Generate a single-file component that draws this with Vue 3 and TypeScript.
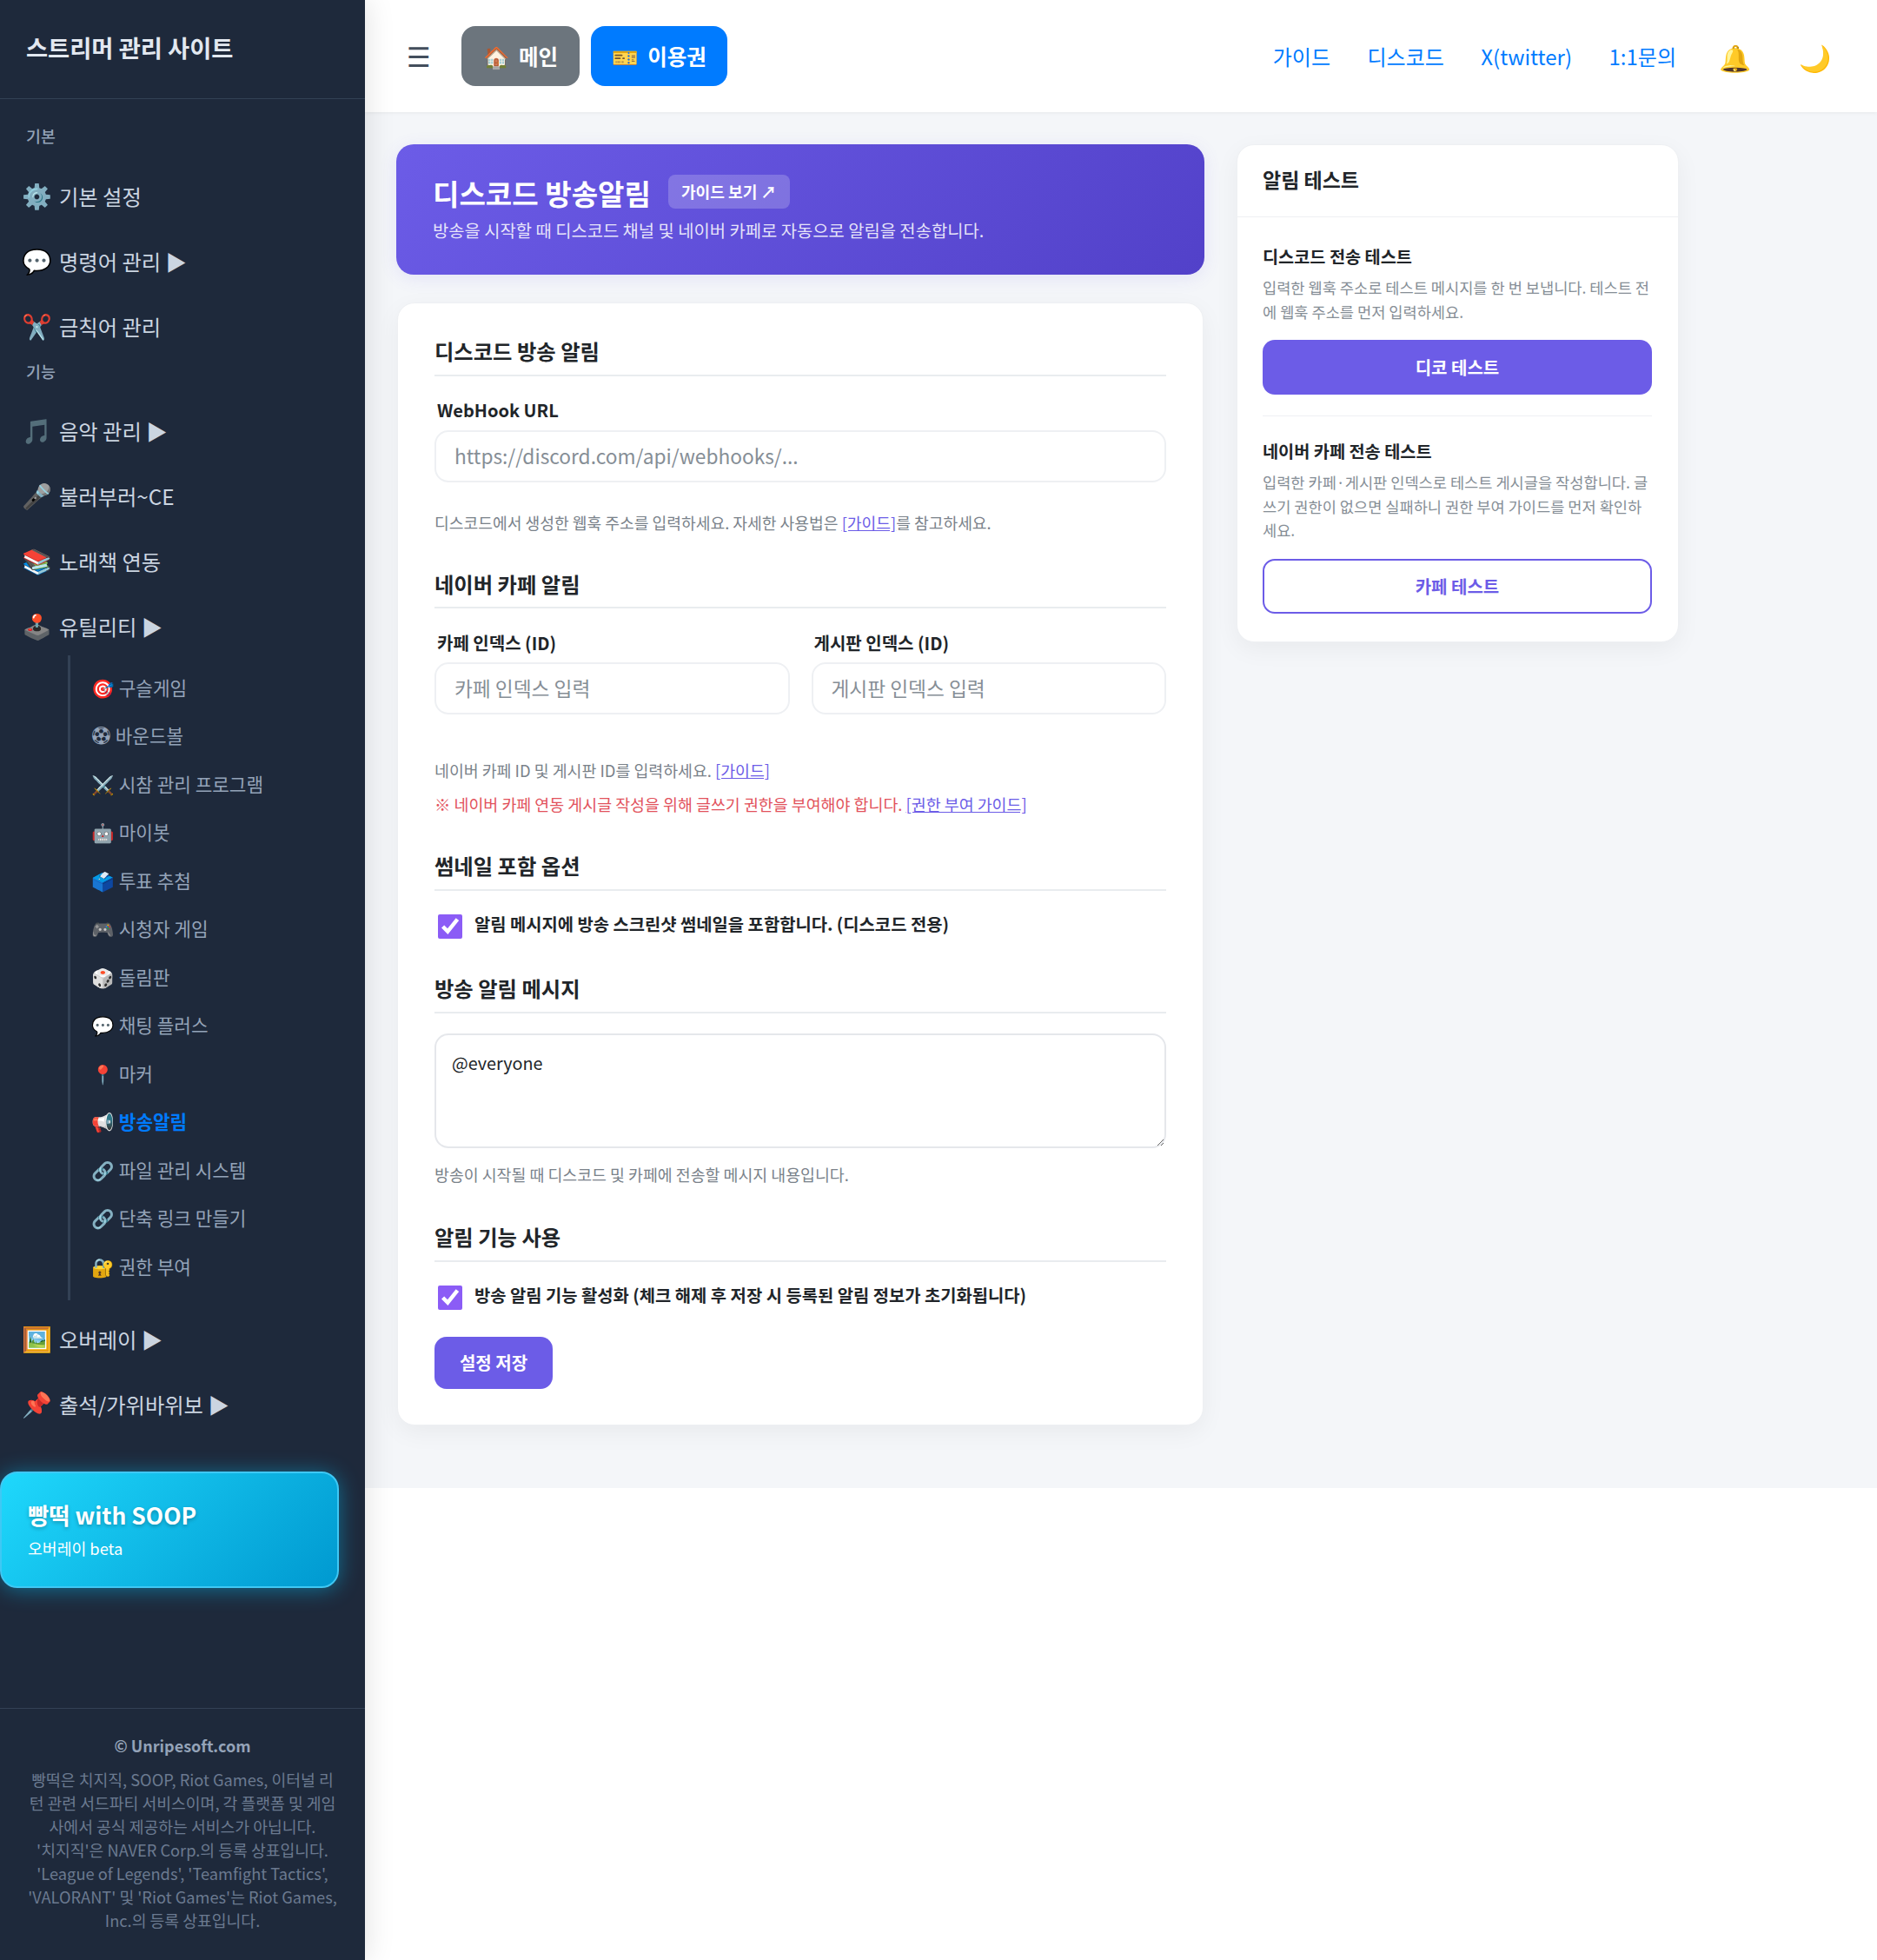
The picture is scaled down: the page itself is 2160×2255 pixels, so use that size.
<script setup lang="ts">
interface NavItem { icon: string; label: string; arrow?: boolean }
const basic: NavItem[] = [
  { icon: '⚙️', label: '기본 설정' },
  { icon: '💬', label: '명령어 관리', arrow: true },
  { icon: '✂️', label: '금칙어 관리' },
]
const feature: NavItem[] = [
  { icon: '🎵', label: '음악 관리', arrow: true },
  { icon: '🎤', label: '불러부러~CE' },
  { icon: '📚', label: '노래책 연동' },
  { icon: '🕹️', label: '유틸리티', arrow: true },
]
const subs = [
  { icon: '🎯', label: '구슬게임' },
  { icon: '⚽\uFE0E', label: '바운드볼', text: true },
  { icon: '⚔️', label: '시참 관리 프로그램' },
  { icon: '🤖', label: '마이봇' },
  { icon: '🗳️', label: '투표 추첨' },
  { icon: '🎮', label: '시청자 게임' },
  { icon: '🎲', label: '돌림판' },
  { icon: '💬', label: '채팅 플러스' },
  { icon: '📍', label: '마커' },
  { icon: '📢', label: '방송알림', active: true },
  { icon: '🔗', label: '파일 관리 시스템' },
  { icon: '🔗', label: '단축 링크 만들기' },
  { icon: '🔐', label: '권한 부여' },
]
const after: NavItem[] = [
  { icon: '🖼️', label: '오버레이', arrow: true },
  { icon: '📌', label: '출석/가위바위보', arrow: true },
]
const footerLines = [
  '빵떡은 치지직, SOOP, Riot Games, 이터널 리',
  '턴 관련 서드파티 서비스이며, 각 플랫폼 및 게임',
  '사에서 공식 제공하는 서비스가 아닙니다.',
  "'치지직'은 NAVER Corp.의 등록 상표입니다.",
  "'League of Legends', 'Teamfight Tactics',",
  "'VALORANT' 및 'Riot Games'는 Riot Games,",
  'Inc.의 등록 상표입니다.',
]
</script>

<template>
  <div class="page">
    <aside class="sidebar">
      <div class="brand">스트리머 관리 사이트</div>
      <nav class="nav">
        <div class="group-label">기본</div>
        <a v-for="i in basic" :key="i.label" class="nav-item"><span class="emo">{{ i.icon }}</span> {{ i.label }}<span v-if="i.arrow"> ▶</span></a>
        <div class="group-label second">기능</div>
        <a v-for="i in feature" :key="i.label" class="nav-item"><span class="emo">{{ i.icon }}</span> {{ i.label }}<span v-if="i.arrow"> ▶</span></a>
        <ul class="sub">
          <li v-for="s in subs" :key="s.label" class="sub-item" :class="{ active: s.active }"><span :class="s.text ? 'ball' : 'sub-emo'">{{ s.icon }}</span> {{ s.label }}</li>
        </ul>
        <a v-for="i in after" :key="i.label" class="nav-item"><span class="emo">{{ i.icon }}</span> {{ i.label }}<span v-if="i.arrow"> ▶</span></a>
      </nav>
      <div class="promo">
        <div class="promo-title">빵떡 with SOOP</div>
        <div class="promo-sub">오버레이 beta</div>
      </div>
      <footer class="foot">
        <div class="foot-title">© Unripesoft.com</div>
        <div class="foot-text"><div v-for="l in footerLines" :key="l">{{ l }}</div></div>
      </footer>
    </aside>

    <div class="main">
      <header class="topbar">
        <div class="top-left">
          <span class="burger">☰</span>
          <a class="pill grey"><span class="pill-emo">🏠</span> 메인</a>
          <a class="pill blue"><span class="pill-emo">🎫</span> 이용권</a>
        </div>
        <div class="top-right">
          <a>가이드</a>
          <a>디스코드</a>
          <a>X(twitter)</a>
          <a>1:1문의</a>
          <span class="top-emo bell">🔔</span>
          <span class="top-emo moon">🌙</span>
        </div>
      </header>

      <div class="content">
        <div class="col-left">
          <section class="banner">
            <div class="banner-head">
              <h1>디스코드 방송알림</h1>
              <a class="chip">가이드 보기 ↗</a>
            </div>
            <p>방송을 시작할 때 디스코드 채널 및 네이버 카페로 자동으로 알림을 전송합니다.</p>
          </section>

          <section class="card form">
            <h2 class="first">디스코드 방송 알림</h2>
            <label class="lab lab-first">WebHook URL</label>
            <input class="field" placeholder="https://discord.com/api/webhooks/..." />
            <p class="hint h1">디스코드에서 생성한 웹훅 주소를 입력하세요. 자세한 사용법은 <a class="lnk">[가이드]</a>를 참고하세요.</p>

            <h2 class="naver">네이버 카페 알림</h2>
            <div class="two">
              <div>
                <label class="lab">카페 인덱스 (ID)</label>
                <input class="field" placeholder="카페 인덱스 입력" />
              </div>
              <div>
                <label class="lab">게시판 인덱스 (ID)</label>
                <input class="field" placeholder="게시판 인덱스 입력" />
              </div>
            </div>
            <p class="hint h2a">네이버 카페 ID 및 게시판 ID를 입력하세요. <a class="lnk">[가이드]</a></p>
            <p class="hint red">※ 네이버 카페 연동 게시글 작성을 위해 글쓰기 권한을 부여해야 합니다. <a class="lnk">[권한 부여 가이드]</a></p>

            <h2 class="thumb">썸네일 포함 옵션</h2>
            <label class="check"><input type="checkbox" checked /><span>알림 메시지에 방송 스크린샷 썸네일을 포함합니다. (디스코드 전용)</span></label>

            <h2 class="msg">방송 알림 메시지</h2>
            <textarea class="area">@everyone</textarea>
            <p class="hint h3">방송이 시작될 때 디스코드 및 카페에 전송할 메시지 내용입니다.</p>

            <h2 class="use">알림 기능 사용</h2>
            <label class="check"><input type="checkbox" checked /><span>방송 알림 기능 활성화 (체크 해제 후 저장 시 등록된 알림 정보가 초기화됩니다)</span></label>
            <button class="save">설정 저장</button>
          </section>
        </div>

        <aside class="card side">
          <div class="side-head">알림 테스트</div>
          <div class="side-body">
            <h3>디스코드 전송 테스트</h3>
            <p>입력한 웹훅 주소로 테스트 메시지를 한 번 보냅니다. 테스트 전에 웹훅 주소를 먼저 입력하세요.</p>
            <button class="btn solid">디코 테스트</button>
            <hr />
            <h3>네이버 카페 전송 테스트</h3>
            <p>입력한 카페·게시판 인덱스로 테스트 게시글을 작성합니다. 글쓰기 권한이 없으면 실패하니 권한 부여 가이드를 먼저 확인하세요.</p>
            <button class="btn outline">카페 테스트</button>
          </div>
        </aside>
      </div>
    </div>
  </div>
</template>

<style>
html, body { margin: 0; padding: 0; background: #fff; }
</style>

<style scoped>
* { box-sizing: border-box; }
.page {
  display: flex;
  min-height: 2255px;
  font-family: "Noto Sans CJK KR", "Noto Sans", sans-serif;
  color: #212529;
}
.sidebar {
  width: 420px;
  flex: none;
  background: #1e293b;
  display: flex;
  flex-direction: column;
  box-shadow: 4px 0 30px rgba(0, 0, 0, 0.1);
  position: relative;
  z-index: 2;
}
.brand {
  height: 114px;
  padding: 0 30px 5px;
  display: flex;
  align-items: center;
  font-size: 27.3px;
  font-weight: 700;
  color: #e2e8f0;
  border-bottom: 1px solid #334155;
}
.nav { padding: 28.5px 0 0; display: flex; flex-direction: column; }
.group-label {
  padding-left: 30px;
  font-size: 18.4px;
  line-height: 27px;
  color: #94a3b8;
  font-weight: 500;
  margin-bottom: 19px;
}
.group-label.second { margin-bottom: 18px; }
.nav-item {
  height: 75px;
  line-height: 70px;
  padding-left: 25px;
  font-size: 24.3px;
  color: #cbd5e1;
  white-space: nowrap;
}
.emo { font-size: 28px; margin-right: 2.5px; }
.sub {
  list-style: none;
  margin: -5px 0 8px 78px;
  padding: 9px 0 12px 24px;
  border-left: 3px solid #334155;
}
.sub-item {
  height: 55.5px;
  line-height: 55.5px;
  font-size: 21.3px;
  color: #94a3b8;
  white-space: nowrap;
}
.sub-item.active { color: #007bff; font-weight: 700; }
.ball { font-family: "DejaVu Sans", sans-serif; font-variant-emoji: text; font-size: 26.5px; line-height: 1; }
.promo {
  width: 390px;
  height: 134px;
  margin-top: 39px;
  padding: 29px 30px 0;
  border: 2px solid #3fc8f4;
  border-radius: 20px;
  background: linear-gradient(135deg, #1fd8fc, #0099d0);
  box-shadow: 0 2px 24px rgba(0, 200, 255, 0.45);
  color: #fff;
}
.promo-title {
  font-size: 26.4px;
  line-height: 38px;
  font-weight: 700;
  text-shadow: 0 2px 4px rgba(0, 0, 0, 0.25);
}
.promo-sub { font-size: 18.3px; line-height: 28px; margin-top: 5px; }
.foot {
  margin-top: auto;
  height: 290px;
  border-top: 1px solid #334155;
  padding: 27px 20px 0;
  text-align: center;
}
.foot-title { font-size: 18px; line-height: 30px; font-weight: 700; color: #94a3b8; margin-bottom: 10.5px; }
.foot-text { font-size: 18.25px; line-height: 27px; color: #6b7a90; white-space: nowrap; }

.main { flex: 1; min-width: 0; background: #fff; }
.topbar {
  height: 129px;
  padding: 0 53px 0 48px;
  display: flex;
  align-items: center;
  justify-content: space-between;
  background: #fff;
  box-shadow: 0 1px 4px rgba(0, 0, 0, 0.06);
  position: relative;
}
.top-left { display: flex; align-items: center; }
.burger { font-size: 31px; color: #434e5c; width: 63px; padding-top: 3px; font-family: "DejaVu Sans", sans-serif; }
.pill {
  height: 69px;
  border-radius: 16px;
  display: flex;
  align-items: center;
  justify-content: center;
  gap: 10px;
  color: #fff;
  font-size: 24.5px;
  font-weight: 600;
  margin-right: 13px;
}
.pill.grey { width: 136px; background: #6c757d; }
.pill.blue { width: 157px; background: #007bff; }
.top-right { display: flex; align-items: center; gap: 42.5px; font-size: 24px; color: #007bff; }
.top-emo { font-size: 30px; }
.bell { margin-left: 6px; }
.moon { margin-left: 13px; }
.content {
  background: #f4f6f9;
  padding: 37px 0 72px 36px;
  display: flex;
  gap: 37px;
  align-items: flex-start;
}
.col-left { width: 930px; }
.banner {
  height: 150px;
  padding: 32px 42px 0;
  border-radius: 20px;
  background: linear-gradient(135deg, #6c5ce7, #5241c9);
  color: #fff;
  box-shadow: 0 4px 20px rgba(108, 92, 231, 0.12);
}
.banner-head { display: flex; align-items: center; gap: 20px; }
.banner h1 { margin: 0; font-size: 33.1px; line-height: 48px; font-weight: 700; }
.chip {
  height: 39px;
  line-height: 39px;
  padding: 0 15px;
  margin-bottom: 3px;
  font-size: 18.1px;
  font-weight: 600;
  border-radius: 8px;
  background: rgba(255, 255, 255, 0.2);
}
.banner p { margin: 4px 0 0; font-size: 19.85px; line-height: 30px; color: rgba(255, 255, 255, 0.85); }
.card {
  background: #fff;
  border: 1px solid #eef0f3;
  border-radius: 20px;
  box-shadow: 0 8px 28px rgba(0, 0, 0, 0.05);
}
.form { margin-top: 32px; padding: 0 42px; height: 1292px; margin-left: 1px; margin-right: 1px; }
h2 {
  margin: 0;
  font-size: 24.3px;
  line-height: 36px;
  font-weight: 700;
  padding-bottom: 9px;
  border-bottom: 2px solid #e9ecef;
}
h2.first { margin-top: 37px; }
.lab { display: block; padding-left: 3px; font-size: 20px; line-height: 30px; font-weight: 600; }
.lab-first { margin-top: 24px; }
.field {
  display: block;
  width: 100%;
  height: 60px;
  margin-top: 8px;
  padding: 0 21px 1px;
  font: 22.7px "Noto Sans CJK KR", sans-serif;
  border: 2px solid #eef0f3;
  border-radius: 16px;
  outline: none;
  background: #fff;
}
.field::placeholder { color: #868e96; opacity: 1; }
.hint { margin: 0; font-size: 18.35px; line-height: 28px; color: #7a828a; }
.h1 { margin-top: 32px; font-size: 18.2px; }
.lnk { color: #6c5ce7; text-decoration: underline; }
.naver { margin-top: 39px; padding-bottom: 8px; }
.two { display: grid; grid-template-columns: 1fr 1fr; gap: 25px; margin-top: 25px; }
.two .field { margin-top: 7px; }
.h2a { margin-top: 50px; }
.red { margin-top: 11px; color: #e2525c; font-size: 18.4px; }
.thumb { margin-top: 38.5px; }
.check { display: flex; align-items: flex-start; gap: 14px; padding-left: 4px; margin-top: 24px; font-size: 19.85px; font-weight: 600; line-height: 26px; }
.check span { padding-top: 1px; }
.check input { width: 28px; height: 28px; margin: 3px 0 0; accent-color: #8b5cf6; flex: none; }
.msg { margin-top: 39px; }
.area {
  display: block;
  width: 100%;
  height: 132px;
  margin-top: 23px;
  padding: 17px 18px;
  font: 19.8px "Noto Sans CJK KR", sans-serif;
  color: #212529;
  border: 2px solid #e5e7eb;
  border-radius: 16px;
  outline: none;
}
.h3 { margin-top: 16px; }
.use { margin-top: 40px; }
.save {
  display: block;
  width: 136px;
  height: 60px;
  margin-top: 31px;
  border: 0;
  border-radius: 14px;
  background: #6c5ce7;
  color: #fff;
  font: 700 20px "Noto Sans CJK KR", sans-serif;
}
.side { width: 509px; height: 573px; }
.side-head {
  height: 83px;
  padding: 0 29px;
  line-height: 78px;
  font-size: 23px;
  font-weight: 700;
  border-bottom: 1px solid #eef0f3;
}
.side-body { padding: 32px 30px 0 29px; }
.side-body h3 { margin: 0; font-size: 19.7px; line-height: 26px; font-weight: 700; }
.side-body p { margin: 9px 0 0; font-size: 17.6px; line-height: 27.6px; color: #868e96; word-break: break-all; }
.btn {
  display: block;
  width: 100%;
  height: 63px;
  border-radius: 14px;
  font: 700 20px "Noto Sans CJK KR", sans-serif;
}
.solid { margin-top: 18.5px; background: #6c5ce7; border: 0; color: #fff; }
.outline { margin-top: 19px; background: #fff; border: 2px solid #6c5ce7; color: #6c5ce7; }
hr { border: 0; border-top: 1px solid #eef0f3; margin: 24.5px 0 27px; }
</style>
